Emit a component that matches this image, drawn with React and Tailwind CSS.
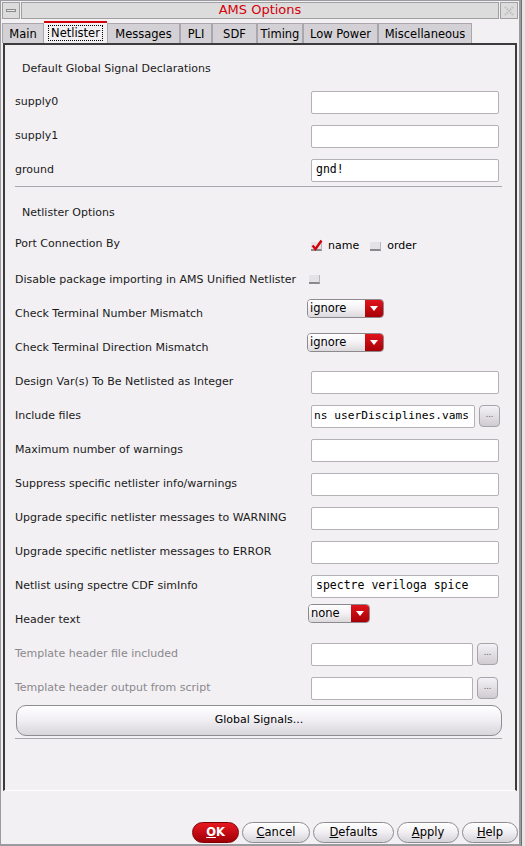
import React from "react";

const labelCls = "w-[296px] shrink-0 text-[11px] text-[#1a1a1a]";

function TextInput({ value = "", w = "w-[188px]", right, size = "text-[11.5px]" }) {
  return (
    <div
      className={`${w} h-[23px] bg-white border border-[#b4b2b6] rounded-[2px] flex items-center ${
        right ? "justify-end pr-[5px]" : "px-[4px]"
      } ${size} text-black whitespace-nowrap overflow-hidden`}
      style={{ fontFamily: '"DejaVu Sans Mono", "Liberation Mono", monospace' }}
    >
      <span className="shrink-0">{value}</span>
    </div>
  );
}

function DotsButton() {
  return (
    <div className="ml-[4px] w-[21px] h-[22px] rounded-[4px] border border-[#a6a4a8] bg-gradient-to-b from-[#f4f2f6] to-[#cfcbd2] flex items-center justify-center text-[8px] text-[#555] leading-none pb-[2px]">
      ...
    </div>
  );
}

function Dropdown({ value, w = "w-[77px]" }) {
  return (
    <div className={`${w} h-[19px] flex rounded-[4px] border border-[#8c8a8e] overflow-hidden`}>
      <div className="flex-1 bg-gradient-to-b from-[#ffffff] via-[#f3f1f4] to-[#dcd9dd] flex items-center pl-[2px] text-[11.5px] text-black">
        {value}
      </div>
      <div className="w-[18px] bg-gradient-to-b from-[#e0141b] to-[#a80006] flex items-center justify-center">
        <svg width="8" height="5" viewBox="0 0 8 5">
          <path d="M0 0 L8 0 L4 5 Z" fill="#fff" />
        </svg>
      </div>
    </div>
  );
}

function Checkbox({ checked }) {
  return (
    <div className="relative w-[11px] h-[9px] bg-[#e4e2e6] border-b-2 border-[#8a888c] border-r border-r-[#b8b6ba]">
      {checked && (
        <svg className="absolute left-[0px] top-[-3px]" width="12" height="12" viewBox="0 0 12 12">
          <path d="M1.5 6.5 L4.5 10 L10.5 1.5" stroke="#d4000a" strokeWidth="2.4" fill="none" />
        </svg>
      )}
    </div>
  );
}

function Row({ label, children, gray }) {
  return (
    <div className="h-[34px] flex items-center">
      <div className={`${labelCls} ${gray ? "text-[#8a888c]" : ""}`}>{label}</div>
      <div className="flex items-center">{children}</div>
    </div>
  );
}

function BottomButton({ children, w, red }) {
  return (
    <div
      className={`${w} h-[21px] rounded-full border flex items-center justify-center text-[11.5px] ${
        red
          ? "border-[#7a0004] bg-gradient-to-b from-[#e81820] to-[#a00008] text-white font-bold"
          : "border-[#8e8c90] bg-gradient-to-b from-[#ffffff] via-[#f0eef2] to-[#d6d3d8] text-black"
      }`}
    >
      {children}
    </div>
  );
}

export default function App() {
  const tabs = [
    ["Main", "w-[42px]"],
    ["Netlister", "w-[63px]"],
    ["Messages", "w-[73px]"],
    ["PLI", "w-[32px]"],
    ["SDF", "w-[45px]"],
    ["Timing", "w-[46px]"],
    ["Low Power", "w-[75px]"],
    ["Miscellaneous", "w-[94px]"],
  ];
  return (
    <div
      className="w-[525px] h-[846px] bg-[#c8c8c8] flex overflow-hidden"
      style={{ fontFamily: '"DejaVu Sans", "Liberation Sans", sans-serif' }}
    >
      <div className="w-[521px] h-[846px] bg-[#f2f0f3] border-[#9c9a9e] border-r-2 border-b-2 border-t border-l flex flex-col">
        {/* title bar */}
        <div className="h-[19px] flex items-stretch px-[1px] pt-[1px] gap-[1px]">
          <div className="w-[18px] h-[17px] bg-[#dcdcdc] border border-[#a0a0a0] flex items-center justify-center">
            <div className="w-[10px] h-[3px] border border-[#8a8a8a] bg-[#e8e8e8]" />
          </div>
          <div className="flex-1 h-[17px] bg-[#dcdcdc] border border-[#a0a0a0] flex items-center justify-center text-[13px] text-[#d4000a] pb-[1px]">
            AMS Options
          </div>
          <div className="w-[18px] h-[17px] bg-[#dcdcdc] border border-[#a0a0a0] flex items-center justify-center">
            <svg width="10" height="10" viewBox="0 0 10 10">
              <path d="M1 1 L9 9 M9 1 L1 9" stroke="#c0c0c0" strokeWidth="2.2" strokeDasharray="1.5 1" />
            </svg>
          </div>
        </div>
        {/* tabs */}
        <div className="h-[22px] flex items-end pl-[1px] mt-[1px]">
          {tabs.map(([t, w]) =>
            t === "Netlister" ? (
              <div
                key={t}
                className={`${w} h-[22px] bg-[#f2f0f3] border-t-2 border-[#d4000a] flex items-center justify-center text-[11.5px] text-black`}
              >
                <span className="border border-dotted border-black px-[2px] leading-[14px]">{t}</span>
              </div>
            ) : (
              <div
                key={t}
                className={`${w} h-[20px] bg-[#d3d1d5] border border-b-0 border-[#a9a7ab] flex items-center justify-center text-[11.5px] text-black pt-[2px]`}
              >
                {t}
              </div>
            )
          )}
        </div>
        {/* panel */}
        <div className="mx-[2px] h-[748px] border-t-2 border-l-2 border-r-2 border-[#3c3c3c] border-b border-b-[#ffffff] flex flex-col pl-[10px] pr-[15px]">
          <div className="h-[24px] mt-[12px] mb-[4px] flex items-center pl-[7px] text-[11px] text-[#1a1a1a]">
            Default Global Signal Declarations
          </div>
          <Row label="supply0"><TextInput /></Row>
          <Row label="supply1"><TextInput /></Row>
          <Row label="ground"><TextInput value="gnd!" /></Row>
          <div className="h-px bg-[#a9a7ab] w-[487px] -mt-px" />
          <div className="h-[26px] mt-[13px] flex items-center pl-[7px] text-[11px] text-[#1a1a1a]">
            Netlister Options
          </div>
          <div className="mt-[1px]">
            <Row label="Port Connection By">
              <div className="flex items-center mt-[4px] text-[11px] text-black">
                <Checkbox checked />
                <span className="ml-[6px]">name</span>
                <div className="ml-[11px]"><Checkbox /></div>
                <span className="ml-[6px]">order</span>
              </div>
            </Row>
          </div>
          <div className="h-[33px] mt-[3px] flex items-center">
            <div className="text-[11px] text-[#1a1a1a] w-[296px] shrink-0">
              Disable package importing in AMS Unified Netlister
            </div>
            <div className="-ml-[2px] -mt-[2px]"><Checkbox /></div>
          </div>
          <Row label="Check Terminal Number Mismatch">
            <div className="-ml-[4px] -mt-[11px]"><Dropdown value="ignore" /></div>
          </Row>
          <Row label="Check Terminal Direction Mismatch">
            <div className="-ml-[4px] -mt-[11px]"><Dropdown value="ignore" /></div>
          </Row>
          <Row label="Design Var(s) To Be Netlisted as Integer"><TextInput /></Row>
          <Row label="Include files">
            <TextInput w="w-[164px]" value="ns userDisciplines.vams" right size="text-[11.2px]" />
            <DotsButton />
          </Row>
          <Row label="Maximum number of warnings"><TextInput /></Row>
          <Row label="Suppress specific netlister info/warnings"><TextInput /></Row>
          <Row label="Upgrade specific netlister messages to WARNING"><TextInput /></Row>
          <Row label="Upgrade specific netlister messages to ERROR"><TextInput /></Row>
          <Row label="Netlist using spectre CDF simInfo"><TextInput value="spectre veriloga spice" /></Row>
          <Row label="Header text">
            <div className="-ml-[3px] -mt-[13px]"><Dropdown value="none" w="w-[62px]" /></div>
          </Row>
          <Row label="Template header file included" gray>
            <TextInput w="w-[162px]" />
            <DotsButton />
          </Row>
          <Row label="Template header output from script" gray>
            <TextInput w="w-[162px]" />
            <DotsButton />
          </Row>
          <div className="w-[486px] h-[31px] ml-px rounded-[10px] border border-[#8e8c90] bg-gradient-to-b from-[#ffffff] via-[#f0eef2] to-[#d9d6db] flex items-center justify-center text-[11px] text-black">
            Global Signals...
          </div>
          <div className="h-px bg-[#a9a7ab] w-[487px] mt-[2px]" />
        </div>
        {/* bottom buttons */}
        <div className="flex-1 flex items-end justify-end pr-[1px] pb-[1px] gap-[3px]">
          <BottomButton w="w-[47px]" red>
            <span><span className="underline">O</span>K</span>
          </BottomButton>
          <BottomButton w="w-[68px]">
            <span><span className="underline">C</span>ancel</span>
          </BottomButton>
          <BottomButton w="w-[81px]">
            <span><span className="underline">D</span>efaults</span>
          </BottomButton>
          <BottomButton w="w-[62px]">
            <span><span className="underline">A</span>pply</span>
          </BottomButton>
          <BottomButton w="w-[56px]">
            <span><span className="underline">H</span>elp</span>
          </BottomButton>
        </div>
      </div>
      <div className="w-[4px] h-full bg-[#e4e4e4] border-l border-[#707070]" />
    </div>
  );
}
